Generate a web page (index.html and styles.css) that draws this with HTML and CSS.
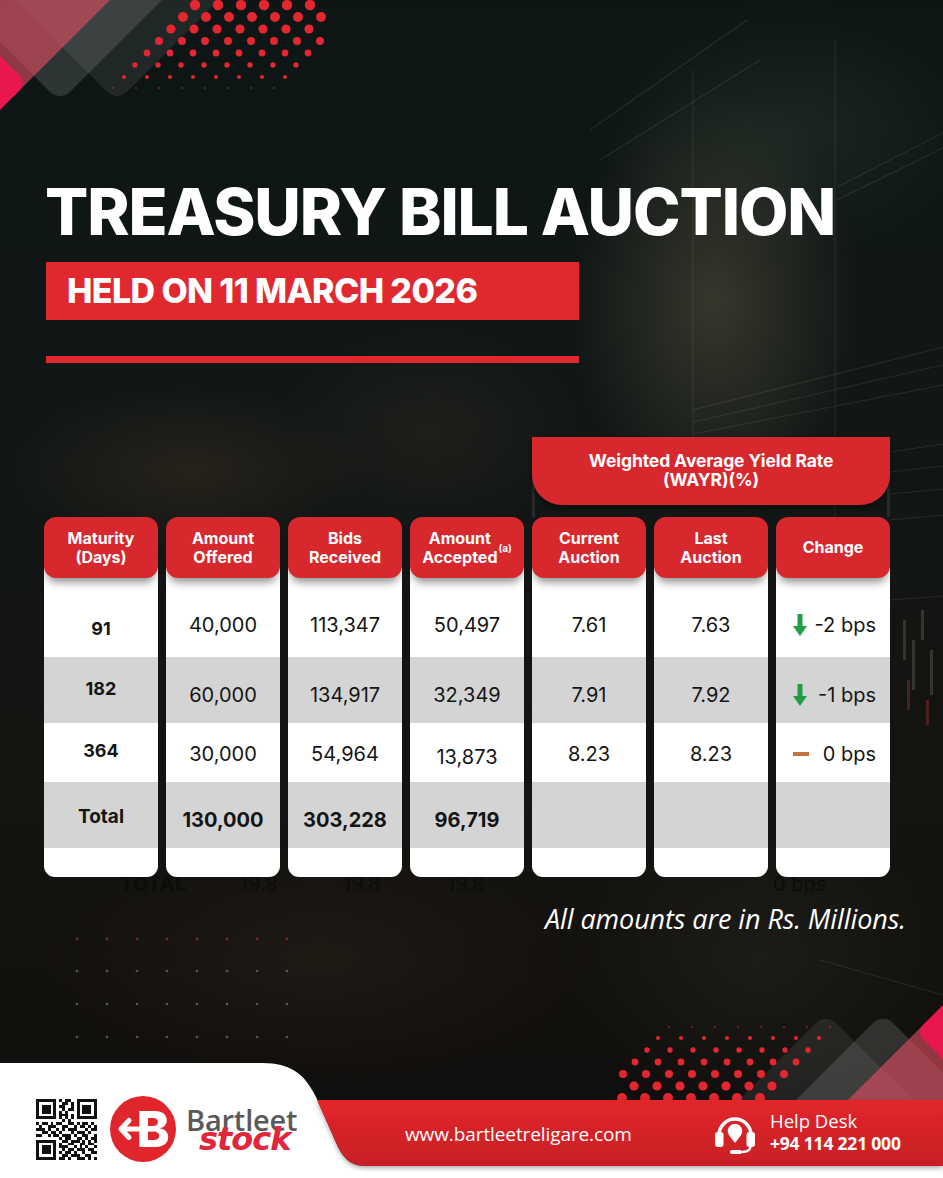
FILE: index.html
```html
<!DOCTYPE html>
<html lang="en">
<head>
<meta charset="utf-8">
<title>Treasury Bill Auction</title>
<link rel="stylesheet" href="styles.css">
</head>
<body>
<div class="page">
  <svg class="backdrop" viewBox="0 0 943 1178" width="943" height="1178" aria-hidden="true">
    <defs>
      <g id="deco">
        <rect x="32.15" y="-102.85" width="169.7" height="169.7" rx="14" transform="rotate(45 117 -18)" fill="rgba(160,166,166,0.13)"/>
        <rect x="-24.85" y="-102.85" width="169.7" height="169.7" rx="14" transform="rotate(45 60 -18)" fill="rgba(160,166,166,0.22)"/>
        <rect x="-86.9" y="-116.9" width="183.8" height="183.8" rx="14" transform="rotate(45 5 -25)" fill="rgba(226,78,98,0.62)"/>
        <rect x="-75.45" y="40.55" width="84.9" height="84.9" rx="10" transform="rotate(45 -33 83)" fill="#e8174e"/>
        <g fill="#e3262f">
          <circle cx="195" cy="5" r="5.2"/><circle cx="218" cy="5" r="5.2"/><circle cx="241" cy="5" r="5.2"/><circle cx="264" cy="5" r="5.2"/><circle cx="287" cy="5" r="5.2"/><circle cx="310" cy="5" r="5.2"/>
          <circle cx="183" cy="17" r="5"/><circle cx="206" cy="17" r="5"/><circle cx="229" cy="17" r="5"/><circle cx="252" cy="17" r="5"/><circle cx="275" cy="17" r="5"/><circle cx="298" cy="17" r="5"/><circle cx="321" cy="17" r="5"/>
          <circle cx="171" cy="29" r="4.6"/><circle cx="194" cy="29" r="4.6"/><circle cx="217" cy="29" r="4.6"/><circle cx="240" cy="29" r="4.6"/><circle cx="263" cy="29" r="4.6"/><circle cx="286" cy="29" r="4.6"/><circle cx="309" cy="29" r="4.6"/>
          <circle cx="159" cy="41" r="4"/><circle cx="182" cy="41" r="4"/><circle cx="205" cy="41" r="4"/><circle cx="228" cy="41" r="4"/><circle cx="251" cy="41" r="4"/><circle cx="274" cy="41" r="4"/><circle cx="297" cy="41" r="4"/><circle cx="320" cy="41" r="4"/>
          <circle cx="147" cy="53" r="3.4"/><circle cx="170" cy="53" r="3.4"/><circle cx="193" cy="53" r="3.4"/><circle cx="216" cy="53" r="3.4"/><circle cx="239" cy="53" r="3.4"/><circle cx="262" cy="53" r="3.4"/><circle cx="285" cy="53" r="3.4"/><circle cx="308" cy="53" r="3.4"/>
          <circle cx="135" cy="65" r="2.7"/><circle cx="158" cy="65" r="2.7"/><circle cx="181" cy="65" r="2.7"/><circle cx="204" cy="65" r="2.7"/><circle cx="227" cy="65" r="2.7"/><circle cx="250" cy="65" r="2.7"/><circle cx="273" cy="65" r="2.7"/><circle cx="296" cy="65" r="2.7"/>
          <circle cx="124" cy="77" r="2"/><circle cx="147" cy="77" r="2"/><circle cx="170" cy="77" r="2"/><circle cx="193" cy="77" r="2"/><circle cx="216" cy="77" r="2"/><circle cx="239" cy="77" r="2"/><circle cx="262" cy="77" r="2"/><circle cx="285" cy="77" r="2"/>
        </g>
        <g fill="rgba(227,38,47,0.55)">
          <circle cx="113" cy="88" r="1.1"/><circle cx="136" cy="88" r="1.1"/><circle cx="159" cy="88" r="1.1"/><circle cx="182" cy="88" r="1.1"/><circle cx="205" cy="88" r="1.1"/><circle cx="228" cy="88" r="1.1"/><circle cx="251" cy="88" r="1.1"/><circle cx="274" cy="88" r="1.1"/>
        </g>
      </g>
      <pattern id="faintdots" x="62" y="955" width="30" height="33" patternUnits="userSpaceOnUse">
        <circle cx="15" cy="16" r="1.3" fill="rgba(210,210,210,0.35)"/>
      </pattern>
      <pattern id="faintred" x="62" y="923" width="30" height="33" patternUnits="userSpaceOnUse">
        <circle cx="15" cy="16" r="1.4" fill="rgba(220,60,60,0.45)"/>
      </pattern>
    </defs>
    <g class="screen-lines" fill="none" stroke="rgba(205,205,185,0.11)" stroke-width="1.1">
      <path d="M590 130 L747 20"/>
      <path d="M600 160 L760 60"/>
      <path d="M693 70 V440"/>
      <path d="M835 40 V560"/>
      <path d="M943 133 L837 187"/>
      <path d="M943 148 L837 200"/>
      <path d="M693 410 L943 347"/>
      <path d="M693 422 L943 365"/>
      <path d="M693 434 L943 385"/>
      <path d="M890 452 L943 444"/>
      <path d="M890 472 L943 466"/>
      <path d="M890 494 L943 489"/>
      <path d="M890 520 L943 515"/>
      <path d="M890 600 L943 596"/>
      <path d="M820 960 L943 995"/>
    </g>
    <g fill="rgba(200,200,190,0.18)">
      <rect x="903" y="620" width="3" height="40"/>
      <rect x="912" y="640" width="3" height="50"/>
      <rect x="921" y="610" width="3" height="30"/>
      <rect x="930" y="650" width="3" height="45"/>
    </g>
    <g fill="rgba(200,60,60,0.32)">
      <rect x="907" y="680" width="3" height="30"/>
      <rect x="926" y="700" width="3" height="25"/>
    </g>
    <rect x="62" y="923" width="240" height="33" fill="url(#faintred)"/>
    <rect x="62" y="955" width="240" height="99" fill="url(#faintdots)"/>
    <use href="#deco"/>
    <use href="#deco" transform="rotate(180 471.5 557.5)"/>
  </svg>

  <main class="content">
    <h1 class="title">TREASURY BILL AUCTION</h1>
    <div class="date-banner">HELD ON 11 MARCH 2026</div>
    <div class="rule"></div>

    <section class="auction">
      <div class="wayr">
        <div class="wayr-box">Weighted Average Yield Rate<br>(WAYR)(%)</div>
      </div>

      <div class="col lead">
        <div class="head">Maturity<br>(Days)</div>
        <div class="cell r1">91</div>
        <div class="cell r2">182</div>
        <div class="cell r3">364</div>
        <div class="cell r4">Total</div>
        <div class="cell r5"></div>
      </div>

      <div class="col">
        <div class="head">Amount<br>Offered</div>
        <div class="cell r1">40,000</div>
        <div class="cell r2">60,000</div>
        <div class="cell r3">30,000</div>
        <div class="cell r4">130,000</div>
        <div class="cell r5"></div>
      </div>

      <div class="col">
        <div class="head">Bids<br>Received</div>
        <div class="cell r1">113,347</div>
        <div class="cell r2">134,917</div>
        <div class="cell r3">54,964</div>
        <div class="cell r4">303,228</div>
        <div class="cell r5"></div>
      </div>

      <div class="col">
        <div class="head">Amount<br>Accepted<sup class="sup">(a)</sup></div>
        <div class="cell r1">50,497</div>
        <div class="cell r2">32,349</div>
        <div class="cell r3 low">13,873</div>
        <div class="cell r4">96,719</div>
        <div class="cell r5"></div>
      </div>

      <div class="col">
        <div class="head">Current<br>Auction</div>
        <div class="cell r1">7.61</div>
        <div class="cell r2">7.91</div>
        <div class="cell r3">8.23</div>
        <div class="cell r4"></div>
        <div class="cell r5"></div>
      </div>

      <div class="col">
        <div class="head">Last<br>Auction</div>
        <div class="cell r1">7.63</div>
        <div class="cell r2">7.92</div>
        <div class="cell r3">8.23</div>
        <div class="cell r4"></div>
        <div class="cell r5"></div>
      </div>

      <div class="col">
        <div class="head">Change</div>
        <div class="cell r1 chg">
          <svg class="arrow" viewBox="0 0 14 22" width="14" height="22" aria-hidden="true"><path d="M4.5 0h5v12h4.5l-7 10l-7-10h4.5z" fill="#1f9e46"/></svg>
          <span>-2 bps</span>
        </div>
        <div class="cell r2 chg">
          <svg class="arrow" viewBox="0 0 14 22" width="14" height="22" aria-hidden="true"><path d="M4.5 0h5v12h4.5l-7 10l-7-10h4.5z" fill="#1f9e46"/></svg>
          <span>-1 bps</span>
        </div>
        <div class="cell r3 chg">
          <span class="dash"></span>
          <span>0 bps</span>
        </div>
        <div class="cell r4"></div>
        <div class="cell r5"></div>
      </div>
    </section>

    <div class="ghost" aria-hidden="true">
      <span class="ghost-b">TOTAL</span><span>19.8</span><span>19.8</span><span>19.8</span><span>0 bps</span>
    </div>

    <p class="note">All amounts are in Rs. Millions.</p>
  </main>

  <footer class="footer">
    <svg class="footer-shape" viewBox="0 0 943 115" width="943" height="115" aria-hidden="true">
      <defs>
        <linearGradient id="band" x1="0" y1="0" x2="0" y2="1">
          <stop offset="0" stop-color="#e2262b"/>
          <stop offset="1" stop-color="#c71f25"/>
        </linearGradient>
        <filter id="sh" x="-5%" y="-20%" width="110%" height="160%">
          <feDropShadow dx="0" dy="2" stdDeviation="2.5" flood-color="#000" flood-opacity="0.35"/>
        </filter>
      </defs>
      <path d="M0 0 H262 C292 0 305 12 316 34 L338 84 C346 99 353 103 368 103 H943 V115 H0 Z" fill="#ffffff"/>
      <path d="M317 37 H943 V103 H368 C353 103 346 99 338 84 Z" fill="url(#band)" filter="url(#sh)"/>
    </svg>

    <div class="footer-row">
      <svg class="qr" viewBox="0 0 21 21" width="61" height="61" shape-rendering="crispEdges" aria-hidden="true">
        <rect width="21" height="21" fill="#fff"/>
        <path fill="#111" fill-rule="evenodd" d="M0 0h7v7h-7zM1 1v5h5v-5zM2 2h3v3h-3z M14 0h7v7h-7zM15 1v5h5v-5zM16 2h3v3h-3z M0 14h7v7h-7zM1 15v5h5v-5zM2 16h3v3h-3z"/>
        <path fill="#111" d="M8 0h1v1h-1zM10 0h2v1h-2zM9 1h2v1h-2zM12 1h1v1h-1zM8 2h2v1h-2zM12 2h1v1h-1zM9 3h1v1h-1zM11 3h2v1h-2zM8 4h1v1h-1zM10 4h1v1h-1zM8 5h3v1h-3zM12 5h1v1h-1zM8 6h1v1h-1zM10 6h1v1h-1zM12 6h1v1h-1zM9 7h1v1h-1zM11 7h1v1h-1z
        M0 8h1v1h-1zM2 8h2v1h-2zM5 8h1v1h-1zM7 8h2v1h-2zM11 8h2v1h-2zM14 8h1v1h-1zM16 8h2v1h-2zM19 8h1v1h-1z
        M1 9h1v1h-1zM4 9h3v1h-3zM9 9h2v1h-2zM13 9h1v1h-1zM15 9h2v1h-2zM18 9h1v1h-1zM20 9h1v1h-1z
        M0 10h3v1h-3zM4 10h1v1h-1zM7 10h1v1h-1zM9 10h1v1h-1zM11 10h3v1h-3zM17 10h1v1h-1zM19 10h2v1h-2z
        M2 11h2v1h-2zM5 11h2v1h-2zM8 11h1v1h-1zM12 11h1v1h-1zM14 11h3v1h-3zM18 11h1v1h-1z
        M0 12h2v1h-2zM4 12h1v1h-1zM6 12h2v1h-2zM9 12h3v1h-3zM13 12h1v1h-1zM16 12h2v1h-2zM20 12h1v1h-1z
        M8 13h1v1h-1zM10 13h2v1h-2zM14 13h2v1h-2zM17 13h1v1h-1zM19 13h2v1h-2z
        M9 14h2v1h-2zM12 14h3v1h-3zM16 14h1v1h-1zM18 14h1v1h-1zM20 14h1v1h-1z
        M8 15h1v1h-1zM11 15h2v1h-2zM15 15h2v1h-2zM18 15h2v1h-2z
        M8 16h3v1h-3zM13 16h1v1h-1zM15 16h1v1h-1zM17 16h1v1h-1zM20 16h1v1h-1z
        M9 17h1v1h-1zM11 17h2v1h-2zM14 17h3v1h-3zM18 17h2v1h-2z
        M8 18h1v1h-1zM10 18h2v1h-2zM13 18h1v1h-1zM16 18h1v1h-1zM19 18h2v1h-2z
        M9 19h2v1h-2zM12 19h3v1h-3zM17 19h2v1h-2z
        M8 20h2v1h-2zM11 20h1v1h-1zM14 20h3v1h-3zM18 20h1v1h-1zM20 20h1v1h-1z"/>
      </svg>

      <svg class="logo" viewBox="0 0 66 66" width="66" height="66" aria-hidden="true">
        <circle cx="33" cy="33" r="33" fill="#e0262c"/>
        <path d="M19 24.5 L11 33 L19 41.5 M11.5 33 H28" stroke="#fff" stroke-width="5" stroke-linecap="round" stroke-linejoin="round" fill="none"/>
        <text x="43" y="51" text-anchor="middle" class="logo-b">B</text>
      </svg>

      <div class="brand">
        <span class="brand-name">Bartleet</span>
        <span class="brand-sub">stock</span>
      </div>

      <div class="url">www.bartleetreligare.com</div>

      <svg class="headset" viewBox="0 0 44 44" width="44" height="44" aria-hidden="true">
        <path d="M6 25 A16 16 0 0 1 38 25" fill="none" stroke="#fff" stroke-width="3.5"/>
        <rect x="2" y="22" width="8.5" height="15" rx="3" fill="#fff"/>
        <rect x="33.5" y="22" width="8.5" height="15" rx="3" fill="#fff"/>
        <path d="M37.5 36 Q37.5 42 29 42" fill="none" stroke="#fff" stroke-width="2.4"/>
        <rect x="17" y="40" width="12" height="4" rx="2" fill="#fff"/>
        <path d="M22 33 L16.2 25.5 A7.3 7.3 0 1 1 27.8 25.5 Z" fill="#fff"/>
      </svg>

      <div class="help">
        <span class="help-label">Help Desk</span>
        <span class="help-num">+94 114 221 000</span>
      </div>
    </div>
  </footer>
</div>
</body>
</html>
```

FILE: styles.css
```css
* { box-sizing: border-box; }

html, body {
  margin: 0;
  padding: 0;
}

body {
  background: #0f1414;
  font-family: Inter, "Noto Sans", sans-serif;
}

.page {
  position: relative;
  width: 943px;
  height: 1178px;
  overflow: hidden;
  display: flex;
  flex-direction: column;
  background:
    radial-gradient(ellipse 200px 300px at 715px 300px, rgba(80, 76, 58, 0.6), rgba(80, 76, 58, 0) 72%),
    radial-gradient(ellipse 260px 170px at 790px 130px, rgba(42, 58, 48, 0.45), rgba(42, 58, 48, 0) 75%),
    radial-gradient(ellipse 240px 110px at 190px 470px, rgba(72, 52, 36, 0.38), rgba(72, 52, 36, 0) 75%),
    radial-gradient(ellipse 200px 140px at 430px 430px, rgba(50, 42, 34, 0.4), rgba(50, 42, 34, 0) 75%),
    radial-gradient(ellipse 360px 160px at 320px 960px, rgba(52, 40, 30, 0.35), rgba(52, 40, 30, 0) 75%),
    radial-gradient(ellipse 260px 200px at 760px 960px, rgba(40, 40, 36, 0.45), rgba(40, 40, 36, 0) 75%),
    linear-gradient(180deg, #0d1515 0%, #111716 35%, #14130f 70%, #100e0d 100%);
}

.backdrop {
  position: absolute;
  left: 0;
  top: 0;
  z-index: 0;
  pointer-events: none;
}

.content {
  position: relative;
  z-index: 1;
  flex: 1;
  padding-top: 180px;
}

.title {
  margin: 0 0 0 45px;
  font-family: Inter, sans-serif;
  font-weight: 800;
  font-size: 64px;
  line-height: 64px;
  letter-spacing: -1.1px;
  color: #ffffff;
  white-space: nowrap;
}

.date-banner {
  margin: 18px 0 0 46px;
  width: 533px;
  height: 58px;
  padding-left: 21px;
  background: #e0282e;
  color: #ffffff;
  font-family: Inter, sans-serif;
  font-weight: 800;
  font-size: 34px;
  line-height: 58px;
  letter-spacing: -0.6px;
  white-space: nowrap;
}

.rule {
  margin: 36px 0 0 46px;
  width: 533px;
  height: 7px;
  background: #e0282e;
}

.auction {
  position: relative;
  z-index: 2;
  margin: 74px 0 0 44px;
  display: grid;
  grid-template-columns: repeat(7, 114px);
  column-gap: 8px;
}

.wayr {
  grid-column: 5 / 8;
  grid-row: 1;
  height: 80px;
  background:
    linear-gradient(#2a2a2a, #2a2a2a) left bottom / 3px 46px no-repeat,
    linear-gradient(#2a2a2a, #2a2a2a) right bottom / 3px 46px no-repeat;
}

.wayr-box {
  height: 68px;
  padding-top: 14px;
  background: #d7282e;
  border-radius: 0 0 30px 30px;
  color: #ffffff;
  font-weight: 700;
  font-size: 17.5px;
  line-height: 19px;
  letter-spacing: -0.1px;
  text-align: center;
  box-shadow: 0 3px 6px rgba(0, 0, 0, 0.45);
}

.col {
  grid-row: 2;
  display: flex;
  flex-direction: column;
  border-radius: 0 0 11px 11px;
  overflow: hidden;
  background: linear-gradient(rgba(255, 255, 255, 0) 30px, #ffffff 30px);
}

.head {
  position: relative;
  z-index: 1;
  height: 61px;
  flex: none;
  display: flex;
  align-items: center;
  justify-content: center;
  text-align: center;
  background: #d7282e;
  border-radius: 12px;
  color: #ffffff;
  font-weight: 700;
  font-size: 16px;
  line-height: 19px;
  box-shadow: 0 7px 9px -3px rgba(0, 0, 0, 0.45);
}

.sup {
  font-size: 10px;
  line-height: 0;
  vertical-align: 4px;
  margin-left: 1px;
}

.cell {
  flex: none;
  display: flex;
  align-items: center;
  justify-content: center;
  font-size: 20px;
  font-weight: 400;
  color: #151515;
}

.r1 { height: 79px; padding-top: 15px; }
.r2 { height: 66px; padding-top: 10px; background: #d4d4d4; }
.r3 { height: 59px; padding-top: 3px; }
.r4 { height: 66px; padding-top: 10px; background: #d4d4d4; font-weight: 700; }
.r5 { height: 29px; }

.r3.low { padding-top: 8px; }

.lead .cell { font-size: 18px; font-weight: 700; }
.lead .r1 { padding-top: 21px; }
.lead .r2 { padding-top: 0; padding-bottom: 4px; }
.lead .r3 { padding-top: 0; padding-bottom: 5px; }
.lead .r4 { padding-top: 2px; font-size: 19px; }

.chg {
  justify-content: space-between;
  padding-left: 17px;
  padding-right: 14px;
}

.arrow {
  display: block;
  flex: none;
}

.dash {
  display: block;
  width: 16px;
  height: 4px;
  background: #c7703a;
}

.ghost {
  display: grid;
  grid-template-columns: 120px 103px 104px 326px auto;
  padding-left: 120px;
  margin-top: -3px;
  height: 20px;
  font-size: 20px;
  line-height: 20px;
  color: #0c0c0c;
}

.ghost-b {
  font-weight: 800;
}

.note {
  margin: 10px 37px 0 0;
  text-align: right;
  font-family: "Open Sans", sans-serif;
  font-style: italic;
  font-size: 27px;
  line-height: 30px;
  letter-spacing: -0.1px;
  color: #ffffff;
}

.footer {
  position: relative;
  z-index: 1;
  flex: none;
  height: 115px;
}

.footer-shape {
  position: absolute;
  left: 0;
  top: 0;
}

.footer-row {
  position: relative;
  display: flex;
  align-items: center;
  height: 98px;
  padding-top: 34px;
}

.qr {
  flex: none;
  margin-left: 36px;
}

.logo {
  flex: none;
  margin-left: 13px;
}

.logo-b {
  font-family: Inter, sans-serif;
  font-weight: 800;
  font-size: 50px;
  fill: #ffffff;
}

.brand {
  flex: none;
  width: 125px;
  margin-left: 10px;
  display: flex;
  flex-direction: column;
}

.brand-name {
  font-family: "Open Sans", sans-serif;
  font-weight: 600;
  font-size: 29px;
  line-height: 30px;
  letter-spacing: -0.2px;
  color: #595959;
}

.brand-sub {
  margin: -11px 0 0 13px;
  font-family: "DejaVu Sans", sans-serif;
  font-weight: 700;
  font-style: italic;
  font-size: 32px;
  line-height: 30px;
  letter-spacing: -1px;
  color: #e2263b;
}

.url {
  flex: none;
  width: 308px;
  margin-left: 94px;
  padding-top: 10px;
  font-family: "Open Sans", sans-serif;
  font-weight: 500;
  font-size: 19px;
  letter-spacing: -0.1px;
  color: #ffffff;
}

.headset {
  flex: none;
  margin-top: 6px;
}

.help {
  margin-left: 13px;
  margin-top: 6px;
  display: flex;
  flex-direction: column;
  color: #ffffff;
  font-family: "Open Sans", sans-serif;
}

.help-label {
  font-weight: 500;
  font-size: 18.5px;
  line-height: 23px;
}

.help-num {
  font-weight: 700;
  font-size: 17.5px;
  line-height: 23px;
  letter-spacing: -0.2px;
}
```
